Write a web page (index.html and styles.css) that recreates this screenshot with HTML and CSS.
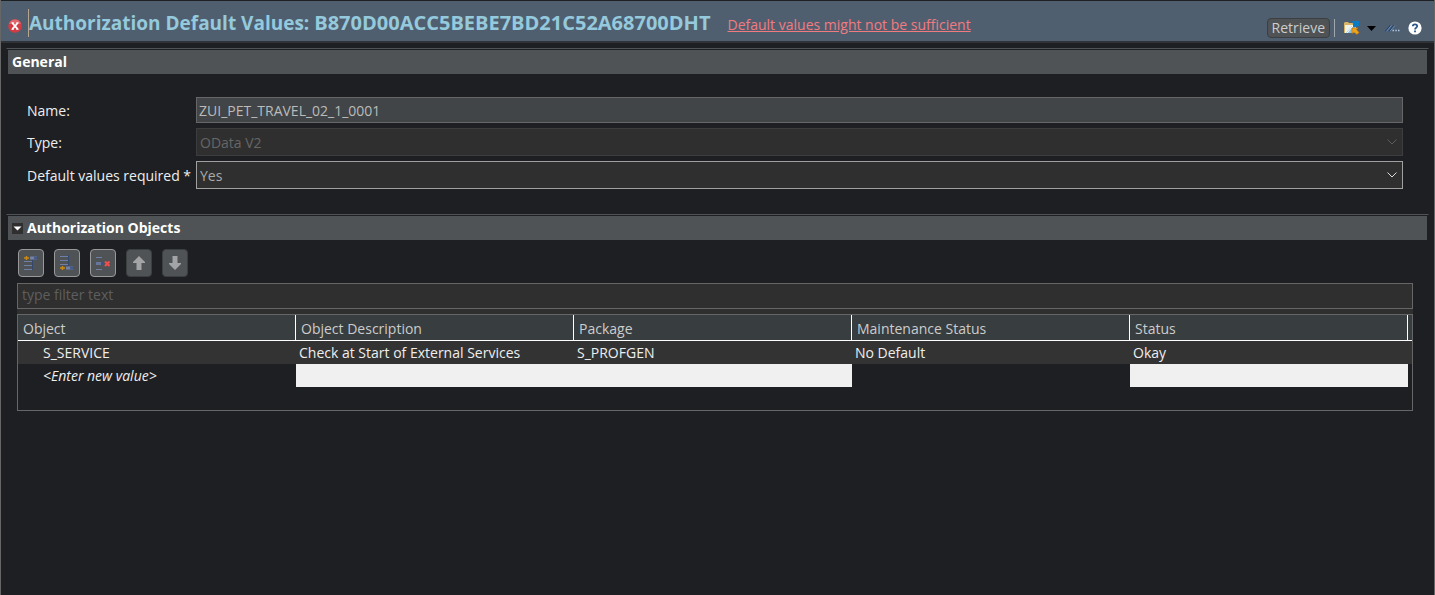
FILE: index.html
```html
<!DOCTYPE html>
<html lang="en">
<head>
<meta charset="utf-8">
<title>Authorization Default Values</title>
<link rel="stylesheet" href="styles.css">
</head>
<body>
<div class="editor">
  <header class="head">
    <svg class="error-icon" width="14" height="14" viewBox="0 0 14 14" aria-label="Error" role="img">
      <circle cx="7" cy="7" r="6.800" fill="#d43c44"/>
      <path d="M1 5a6.300 6.300 0 0 1 12 0z" fill="#e0686c"/>
      <path d="M4.300 4l5.400 6.200M9.700 4l-5.400 6.200" stroke="#fff" stroke-width="1.800" fill="none"/>
      <path d="M3.500 3.800h2.300M8.300 3.800h2.300M3.500 10.300h2.300M8.300 10.300h2.300" stroke="#fff" stroke-width="1"/>
    </svg>
    <h1 class="title">Authorization Default Values: <span class="key">B870D00ACC5BEBE7BD21C52A68700DHT</span></h1>
    <a class="warning" href="#objects">Default values might not be sufficient</a>
    <div class="tools">
      <button class="retrieve" type="button">Retrieve</button>
      <span class="divider"></span>
      <button class="tool share" type="button" aria-label="Share link">
        <svg width="16" height="14" viewBox="0 0 16 14">
          <path d="M0 2l1-1h3l1 1h7v10H0z" fill="#d9b467"/>
          <path d="M1 4h11v8H1z" fill="#f0f3ea"/>
          <path d="M2 12l6-7 4 2v5z" fill="#8fc0dc"/>
          <path d="M3 12l6-7" stroke="#fff" stroke-width="1"/>
          <path d="M8 0h7v5h-2l-1 1H9V3z" fill="#0b7cc4"/>
          <path d="M8 7h6l-1.500 1.500 2.500 3-2 2-3-2.500L8 12.500z" fill="#f2a417" stroke="#b87412" stroke-width=".7"/>
        </svg>
      </button>
      <button class="tool menu" type="button" aria-label="Share options">
        <svg width="9" height="5" viewBox="0 0 9 5"><path d="M0 0h9L4.500 5z" fill="#000"/></svg>
      </button>
      <button class="tool trace" type="button" aria-label="Toggle comments">
        <svg width="15" height="7" viewBox="0 0 15 7">
          <path d="M0.500 6.500L5.500 .5M4 6.500L9 .5" stroke="#1f4272" stroke-width="1.400"/>
          <path d="M1.300 6.500L6.300 .5M4.800 6.500L9.800 .5" stroke="#8eaed0" stroke-width=".7"/>
          <path d="M7.500 5.500H9M10.300 5.500h1.500M13 5.500h1.500" stroke="#a8c8ea" stroke-width="1.400"/>
        </svg>
      </button>
      <button class="tool help" type="button" aria-label="Help">
        <svg width="14" height="14" viewBox="0 0 14 14">
          <circle cx="7" cy="7" r="6.600" fill="#fff"/>
          <path d="M4.800 5.300C4.800 2.600 9.200 2.700 9.200 5.200c0 1.500-2.200 1.500-2.200 3.200" fill="none" stroke="#2a5586" stroke-width="1.700"/>
          <path d="M6.100 9.600h1.800v1.700H6.100z" fill="#2a5586"/>
        </svg>
      </button>
    </div>
  </header>

  <main class="body">
    <section class="section">
      <h2 class="bar">General</h2>
      <form class="form">
        <label for="name">Name:</label>
        <input class="field name" id="name" type="text" value="ZUI_PET_TRAVEL_02_1_0001" readonly>
        <label for="type">Type:</label>
        <span class="combo">
          <select class="field" id="type" disabled><option>OData V2</option></select>
          <svg class="chevron off" width="10" height="6" viewBox="0 0 10 6"><path d="M.5.5L5 5 9.500.5"/></svg>
        </span>
        <label for="required">Default values required *</label>
        <span class="combo">
          <select class="field" id="required"><option>Yes</option><option>No</option></select>
          <svg class="chevron" width="10" height="6" viewBox="0 0 10 6"><path d="M.5.5L5 5 9.500.5"/></svg>
        </span>
      </form>
    </section>

    <section class="section" id="objects">
      <h2 class="bar">
        <button class="twistie" type="button" aria-label="Collapse Authorization Objects">
          <svg width="9" height="5" viewBox="0 0 9 5"><path d="M.5.5h8L4.500 4.500z" fill="#fff"/></svg>
        </button>
        Authorization Objects
      </h2>
      <div class="content">
        <div class="toolbar">
          <button type="button" class="action" aria-label="Insert above">
            <svg width="16" height="16" viewBox="0 0 16 16">
              <path d="M3.500 1v4M1 3h5" stroke="#c98a17" stroke-width="1.400"/>
              <path d="M7 1.500h7v3H7z" fill="#7482a6"/><path d="M11 1.500h3v3h-3z" fill="#455a89"/>
              <path d="M1 6.500h8M1 10.500h8M1 14.500h8" stroke="#6f80a8"/>
              <path d="M9.500 5v10" stroke="#34486f"/>
            </svg>
          </button>
          <button type="button" class="action" aria-label="Insert below">
            <svg width="16" height="16" viewBox="0 0 16 16">
              <path d="M1 1.500h8M1 5.500h8M1 9.500h8" stroke="#6f80a8"/>
              <path d="M9.500 0v11" stroke="#34486f"/>
              <path d="M3.500 11v4M1 13h5" stroke="#c98a17" stroke-width="1.400"/>
              <path d="M7 11.500h7v3H7z" fill="#7482a6"/><path d="M11 11.500h3v3h-3z" fill="#455a89"/>
            </svg>
          </button>
          <button type="button" class="action" aria-label="Delete">
            <svg width="16" height="16" viewBox="0 0 16 16">
              <path d="M1 2.500h6M1 14.500h6" stroke="#6f80a8"/>
              <path d="M1 7h8v3H1z" fill="#65759c"/><path d="M6 7h3v3H6z" fill="#3c5280"/>
              <path d="M10 6.500l4.500 4.500M14.500 6.500L10 11" stroke="#f0504f" stroke-width="2"/>
            </svg>
          </button>
          <button type="button" class="action" aria-label="Move up" disabled>
            <svg width="16" height="16" viewBox="0 0 16 16"><path d="M8 1l6 6v1h-3.500v7h-5V8H2V7z" fill="#a2a4a6"/></svg>
          </button>
          <button type="button" class="action" aria-label="Move down" disabled>
            <svg width="16" height="16" viewBox="0 0 16 16"><path d="M8 15l6-6V8h-3.500V1h-5v7H2v1z" fill="#a2a4a6"/></svg>
          </button>
        </div>
        <div class="list">
          <input class="filter" type="text" placeholder="type filter text" aria-label="Filter">
          <div class="grid">
            <table class="table">
              <colgroup><col><col><col><col><col><col class="rest"></colgroup>
              <thead>
                <tr><th>Object</th><th>Object Description</th><th>Package</th><th>Maintenance Status</th><th>Status</th><td></td></tr>
              </thead>
              <tbody>
                <tr class="filled"><td class="object">S_SERVICE</td><td>Check at Start of External Services</td><td>S_PROFGEN</td><td>No Default</td><td>Okay</td><td></td></tr>
                <tr><td class="object new">&lt;Enter new value&gt;</td><td class="blank"></td><td class="blank"></td><td></td><td class="blank"></td><td></td></tr>
              </tbody>
            </table>
          </div>
        </div>
      </div>
    </section>
  </main>
</div>
</body>
</html>
```
FILE: styles.css
```css
* {
  box-sizing: border-box;
}

body {
  margin: 0;
  background: #1e1f22;
  color: #eee;
  font: 14px/20px "Open Sans", "Noto Sans", sans-serif;
}

button,
input,
select {
  font: inherit;
  color: inherit;
}

svg {
  display: block;
}

.editor {
  min-height: 100vh;
  border: 1px solid #666;
  border-width: 0 1px;
}

.head {
  display: flex;
  align-items: center;
  height: 43px;
  padding: 4px 12px 0 7px;
  background: #505f70;
  border-top: 1px solid #1e1f22;
  border-bottom: 2px solid #2f3338;
}

.error-icon {
  margin: 6px 6px 0 0;
}

.title {
  margin: 0;
  border-left: 1px solid #b5a58c;
  color: #95c9dc;
  font-size: 19px;
  line-height: 28px;
  white-space: nowrap;
}

.key {
  font-size: 20px;
}

.warning {
  margin: 4px 0 0 17px;
  color: #f27b80;
  white-space: nowrap;
}

.tools {
  display: flex;
  align-items: center;
  margin: 10px 0 0 auto;
}

.retrieve {
  height: 20px;
  padding: 0 4px;
  border: 1px solid #3b3f42;
  border-radius: 4px;
  background: #4f5355;
  color: #ccc;
  line-height: 18px;
}

.divider {
  width: 1px;
  height: 18px;
  margin: 0 9px 0 4px;
  background: #a0a6ad;
}

.tool {
  padding: 0;
  border: 0;
  background: none;
}

.menu {
  margin-left: 7px;
}

.trace {
  margin-left: 9px;
}

.help {
  margin-left: 8px;
}

.body {
  padding: 5px 5px 0;
}

.section {
  padding: 1px;
  border: 1px solid transparent;
  border-top-color: #4f5355;
}

.bar {
  display: flex;
  align-items: center;
  height: 24px;
  margin: 0;
  padding: 0 4px;
  background: #4f5355;
  color: #fff;
  font-size: 14px;
}

.form {
  display: grid;
  grid-template-columns: 164px 1fr;
  gap: 5px;
  align-items: center;
  padding: 23px 24px 23px 19px;
}

.form label {
  padding-top: 2px;
  white-space: nowrap;
}

.field {
  display: block;
  width: 100%;
  height: 28px;
  padding: 1px 3px 0;
  border: 1px solid #a0a0a0;
  border-radius: 0;
  outline: 0;
  background: #2f2f2f;
  color: #aaa;
  appearance: none;
}

.name {
  height: 26px;
  padding: 0 2px;
  border-color: #666;
  background: #414547;
  color: #bbb;
}

.field:disabled {
  border-color: #3b3d3e;
  color: #666;
  opacity: 1;
}

.combo {
  display: grid;
  align-items: center;
}

.combo > * {
  grid-area: 1 / 1;
}

.chevron {
  justify-self: end;
  margin-right: 6px;
  fill: none;
  stroke: #ddd;
  pointer-events: none;
}

.off {
  stroke: #5c5c5c;
}

.twistie {
  display: grid;
  place-items: center;
  width: 11px;
  height: 11px;
  margin-right: 4px;
  padding: 0;
  border: 0;
  background: #2f2f2f;
}

.content {
  padding: 9px 14px 0 9px;
}

.toolbar {
  display: flex;
  gap: 10px;
  padding-left: 1px;
}

.action {
  display: grid;
  place-items: center;
  width: 26px;
  height: 28px;
  padding: 0;
  border: 1px solid #999;
  border-radius: 4px;
  background: #4f5355;
}

.action:disabled {
  border-color: #3b3f40;
}

.list {
  margin-top: 6px;
  background: #2f2f2f;
}

.filter {
  display: block;
  width: 100%;
  height: 26px;
  margin-bottom: 5px;
  padding: 0 4px 3px;
  border: 1px solid #666;
  border-radius: 0;
  outline: 0;
  background: #2f2f2f;
}

.filter::placeholder {
  color: #5e5e5e;
}

.grid {
  height: 97px;
  border: 1px solid #666;
  background: #1e1f22;
}

.table {
  width: 100%;
  table-layout: fixed;
  border-spacing: 0;
  white-space: nowrap;
}

.rest {
  width: 4px;
}

.table th,
.table td {
  height: 23px;
  padding: 0 3px;
  font-weight: 400;
  text-align: left;
}

.table thead th,
.table thead td {
  height: 26px;
  padding: 2px 5px 0;
  border-bottom: 1px solid #fff;
  background: #383d3f;
  color: #ccc;
}

.table thead th {
  border-right: 1px solid #fff;
}

.table td:last-child {
  padding: 0;
}

.filled {
  background: #333;
}

.table .object {
  padding-left: 25px;
}

.new {
  font-style: italic;
}

.blank {
  background: #f0f0f0;
}
```
